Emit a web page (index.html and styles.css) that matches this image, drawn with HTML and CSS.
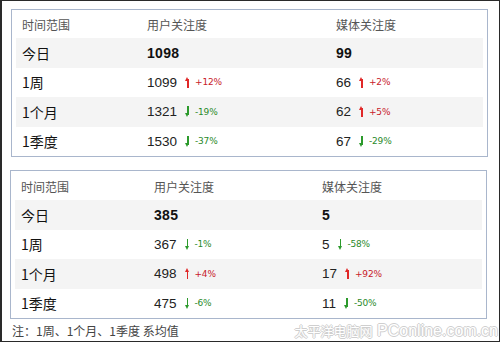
FILE: index.html
```html
<!DOCTYPE html>
<html lang="zh-CN">
<head>
<meta charset="utf-8">
<link rel="stylesheet" href="styles.css">
</head>
<body>
<div class="frame">
  <div class="panel p1">
    <div class="row head"><div>时间范围</div><div>用户关注度</div><div>媒体关注度</div></div>
    <div class="row shade"><div class="lbl">今日</div><div class="num b">1098</div><div class="num b">99</div></div>
    <div class="row"><div class="lbl">1周</div><div class="num">1099<i class="up"></i><span class="pct red">+12%</span></div><div class="num">66<i class="up"></i><span class="pct red">+2%</span></div></div>
    <div class="row shade"><div class="lbl">1个月</div><div class="num">1321<i class="dn"></i><span class="pct grn">-19%</span></div><div class="num">62<i class="up"></i><span class="pct red">+5%</span></div></div>
    <div class="row"><div class="lbl">1季度</div><div class="num">1530<i class="dn"></i><span class="pct grn">-37%</span></div><div class="num">67<i class="dn"></i><span class="pct grn">-29%</span></div></div>
  </div>
  <div class="panel p2">
    <div class="row head"><div>时间范围</div><div>用户关注度</div><div>媒体关注度</div></div>
    <div class="row shade"><div class="lbl">今日</div><div class="num b">385</div><div class="num b">5</div></div>
    <div class="row"><div class="lbl">1周</div><div class="num">367<i class="dn"></i><span class="pct grn">-1%</span></div><div class="num">5<i class="dn"></i><span class="pct grn">-58%</span></div></div>
    <div class="row shade"><div class="lbl">1个月</div><div class="num">498<i class="up"></i><span class="pct red">+4%</span></div><div class="num">17<i class="up"></i><span class="pct red">+92%</span></div></div>
    <div class="row"><div class="lbl">1季度</div><div class="num">475<i class="dn"></i><span class="pct grn">-6%</span></div><div class="num">11<i class="dn"></i><span class="pct grn">-50%</span></div></div>
  </div>
  <div class="foot">
    <span class="note">注：1周、1个月、1季度 系均值</span>
    <span class="mark"><span class="cn">太平洋电脑网</span> <span class="en">PConline.com.cn</span></span>
  </div>
</div>
</body>
</html>
```
FILE: styles.css
```css
html, body { margin: 0; padding: 0; background: #fff; }
body { font-family: "Liberation Sans", "Noto Sans CJK SC", sans-serif; color: #111; }
.frame {
  width: 500px; height: 342px; box-sizing: border-box;
  border: 1px solid #2a2a2a; border-left-width: 2px;
  padding: 8px 0 0 8px;
  display: flex; flex-direction: column;
}
.panel {
  width: 477px; box-sizing: border-box;
  border: 1px solid #a9b6cc;
  padding: 0 4px;
}
.p1 { margin-left: 1px; }
.p2 { margin-top: 13px; }
.row { display: grid; align-items: center; height: 29.5px; }
.p1 .row { grid-template-columns: 125px 189px 1fr; }
.p2 .row { grid-template-columns: 133px 168px 1fr; }
.row > div { padding-left: 6px; white-space: nowrap; }
.p1 .head { height: 27px; }
.p2 .head { height: 28px; }
.head { font-size: 12px; color: #555; font-family: "Noto Sans CJK SC", sans-serif; padding-top: 1px; }
.shade { background: #f4f4f4; }
.lbl { font-size: 14px; font-family: "Noto Sans CJK SC", sans-serif; color: #111; }
.num { font-size: 13.5px; color: #222; display: flex; align-items: center; }
.num.b { font-weight: bold; font-size: 14px; color: #111; letter-spacing: 0.3px; }
.up, .dn { display: inline-block; width: 7px; height: 11px; margin: 0 4px 0 7px; position: relative; }
.up::before, .dn::before {
  content: ""; position: absolute; left: 3px; width: 1.5px; top: 2px; bottom: 0;
}
.up::before { background: #e02828; }
.dn::before { background: #2c9a2c; top: 0; bottom: 2px; }
.up::after, .dn::after {
  content: ""; position: absolute; left: 1px; width: 0; height: 0;
  border-left: 2.75px solid transparent; border-right: 2.75px solid transparent;
}
.up::after { top: 0; border-bottom: 4px solid #e02828; }
.dn::after { bottom: 0; border-top: 4px solid #2c9a2c; }
.pct { font-size: 9px; font-family: "DejaVu Sans", sans-serif; letter-spacing: -0.2px; }
.red { color: #c8202a; }
.grn { color: #2a8a2a; }
.foot { display: flex; justify-content: space-between; align-items: flex-end; flex: 1; padding: 0 1px 0 2px; }
.note { font-size: 12px; color: #444; font-family: "Noto Sans CJK SC", sans-serif; align-self: flex-start; margin-top: 3px; }
.mark {
  color: #fff; white-space: nowrap; margin-bottom: 1px;
  text-shadow: 1px 0 #cfcfcf, -1px 0 #cfcfcf, 0 1px #cfcfcf, 0 -1px #cfcfcf;
}
.mark .cn { font-size: 13px; font-family: "Noto Sans CJK SC", sans-serif; }
.mark .en { font-size: 16px; font-family: "Liberation Sans", sans-serif; }
```
